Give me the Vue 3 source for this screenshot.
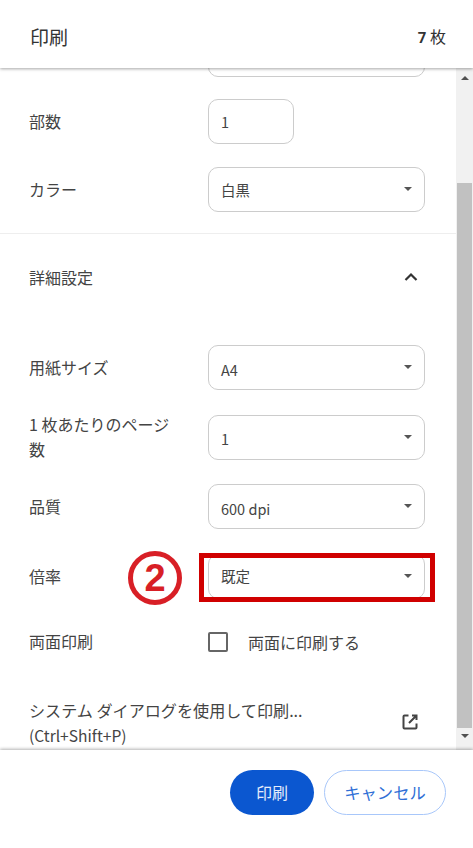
<script setup>
const rowsA = [
  { label: '用紙サイズ', value: 'A4' },
  { label: '1 枚あたりのページ数', value: '1', wrap: true },
  { label: '品質', value: '600 dpi' },
]
</script>

<template>
  <div class="page">
    <header class="head">
      <span class="title">印刷</span>
      <span class="count"><b>7</b> 枚</span>
    </header>

    <div class="middle">
      <main class="content">
        <div class="row first"><span class="label"></span><div class="field select"></div></div>
        <div class="row copies">
          <span class="label">部数</span>
          <div class="field small">1</div>
        </div>
        <div class="row color">
          <span class="label">カラー</span>
          <div class="field select">白黒<i class="caret"></i></div>
        </div>
        <div class="divider"></div>
        <div class="more">
          <span class="label">詳細設定</span>
          <svg class="chev" width="16" height="10" viewBox="0 0 16 10"><path d="M2.5 8 8 2.5 13.500 8" fill="none" stroke="#333" stroke-width="2.200"/></svg>
        </div>
        <div class="group">
          <div v-for="r in rowsA" :key="r.label" class="row gap">
            <span class="label" :class="{ wrap: r.wrap }">{{ r.label }}</span>
            <div class="field select"><span class="latin">{{ r.value }}</span><i class="caret"></i></div>
          </div>
          <div class="row gap">
            <span class="label">倍率</span>
            <div class="field select"><span class="cjk">既定</span><i class="caret"></i></div>
          </div>
        </div>
        <div class="row duplex">
          <span class="label">両面印刷</span>
          <label class="check"><i class="box"></i>両面に印刷する</label>
        </div>
        <div class="system">
          <div class="systext">
            <div>システム ダイアログを使用して印刷...</div>
            <div class="keys">(Ctrl+Shift+P)</div>
          </div>
          <svg class="open" width="18" height="18" viewBox="0 0 18 18">
            <path d="M7.500 2.500H3.500a1 1 0 0 0-1 1v11a1 1 0 0 0 1 1h11a1 1 0 0 0 1-1v-4M11 2.500h4.500V7M15.500 2.500 8 10" fill="none" stroke="#444" stroke-width="2"/>
          </svg>
        </div>
      </main>
      <div class="scrollbar">
        <i class="arrow up"></i>
        <div class="thumb"></div>
        <i class="arrow down"></i>
      </div>
    </div>

    <footer class="foot">
      <button class="btn primary">印刷</button>
      <button class="btn ghost">キャンセル</button>
    </footer>

    <div class="mark-num">2</div>
    <div class="mark-box"></div>
  </div>
</template>

<style>
html, body { margin: 0; background: #fff; }
</style>

<style scoped>
.page {
  position: relative;
  width: 473px;
  height: 848px;
  display: flex;
  flex-direction: column;
  overflow: hidden;
  background: #fff;
  color: #3c4043;
  font-family: "Noto Sans CJK JP", "Noto Sans", sans-serif;
  font-size: 15px;
}
.head {
  position: relative;
  z-index: 2;
  height: 68px;
  flex: none;
  box-sizing: border-box;
  padding: 4px 27px 0 30px;
  display: flex;
  align-items: center;
  justify-content: space-between;
  box-shadow: 0 1px 3px rgba(0, 0, 0, .35);
  background: #fff;
}
.title { font-size: 19px; color: #333; }
.count { font-size: 16px; color: #333; }
.count b { font-family: "Roboto", sans-serif; font-size: 15px; }
.middle {
  flex: 1;
  min-height: 0;
  display: flex;
  overflow: hidden;
}
.content {
  flex: 1;
  min-width: 0;
  overflow: hidden;
}
.row {
  display: flex;
  align-items: center;
  padding: 0 31px 0 29px;
}
.gap { height: 45px; }
.first { margin-top: -36px; }
.copies { margin-top: 22px; }
.color { margin-top: 23px; }
.label {
  width: 179px;
  flex: none;
  font-size: 16px;
  line-height: 25px;
  color: #444;
}
.label.wrap { width: 150px; margin-right: 29px; }
.field {
  box-sizing: border-box;
  height: 45px;
  border: 1px solid #ccc;
  border-radius: 10px;
  padding: 0 12px;
  display: flex;
  align-items: center;
  position: relative;
  background: #fff;
  font-size: 14.500px;
  color: #444;
  flex: none;
}
.latin { margin-top: 3px; }
.cjk { margin-bottom: 1px; }
.select { width: 217px; }
.small { width: 86px; }
.caret {
  position: absolute;
  right: 12px;
  top: 19px;
  border-left: 4.500px solid transparent;
  border-right: 4.500px solid transparent;
  border-top: 4.500px solid #555;
}
.divider {
  height: 1px;
  background: #eee;
  margin-top: 21px;
}
.more {
  height: 86px;
  box-sizing: border-box;
  padding: 0 37px 0 29px;
  display: flex;
  align-items: center;
  justify-content: space-between;
}
.group {
  margin-top: 25px;
  display: flex;
  flex-direction: column;
  gap: 24.500px;
}
.duplex { margin-top: 22px; height: 42px; }
.check {
  display: flex;
  align-items: center;
  font-size: 16px;
  color: #444;
}
.box {
  width: 20px;
  height: 20px;
  box-sizing: border-box;
  border: 2px solid #666;
  border-radius: 2px;
  margin-right: 20px;
}
.system {
  margin-top: 34px;
  padding: 0 37px 0 29px;
  display: flex;
  align-items: center;
  justify-content: space-between;
  font-size: 16.100px;
  color: #444;
}
.systext { line-height: 27px; }
.keys { font-size: 15.600px; line-height: 23px; }
.scrollbar {
  width: 17px;
  flex: none;
  background: #f1f1f1;
  display: flex;
  flex-direction: column;
  align-items: center;
  position: relative;
}
.arrow {
  width: 0;
  height: 0;
  border-left: 4px solid transparent;
  border-right: 4px solid transparent;
}
.arrow.up { border-bottom: 4px solid #505050; margin-top: 8px; }
.arrow.down { border-top: 4px solid #505050; margin-top: 6px; }
.thumb {
  width: 15px;
  height: 545px;
  margin-top: 103px;
  background: #c1c1c1;
}
.foot {
  position: relative;
  z-index: 2;
  height: 98px;
  flex: none;
  box-sizing: border-box;
  padding: 20px 27px 0 0;
  display: flex;
  justify-content: flex-end;
  align-items: flex-start;
  gap: 10px;
  background: #fff;
  box-shadow: 0 -1px 3px rgba(0, 0, 0, .3);
}
.btn {
  height: 45px;
  border-radius: 23px;
  font-family: inherit;
  font-size: 16px;
  padding: 0 0 2px;
  box-sizing: border-box;
}
.primary {
  width: 84px;
  border: none;
  background: #0b57d0;
  color: #e4ecfb;
}
.ghost {
  width: 122px;
  background: #fff;
  border: 1px solid #a8c7fa;
  color: #2f6fd6;
  font-size: 16.300px;
}
.mark-num {
  position: absolute;
  left: 128px;
  top: 551px;
  width: 54px;
  height: 54px;
  box-sizing: border-box;
  border: 5px solid #d81f26;
  border-radius: 50%;
  color: #d81f26;
  font-family: "Liberation Sans", sans-serif;
  font-weight: 700;
  font-size: 38px;
  line-height: 44px;
  text-align: center;
}
.mark-box {
  position: absolute;
  left: 199px;
  top: 553px;
  width: 236px;
  height: 49px;
  box-sizing: border-box;
  border: 5px solid #d00000;
}
</style>
